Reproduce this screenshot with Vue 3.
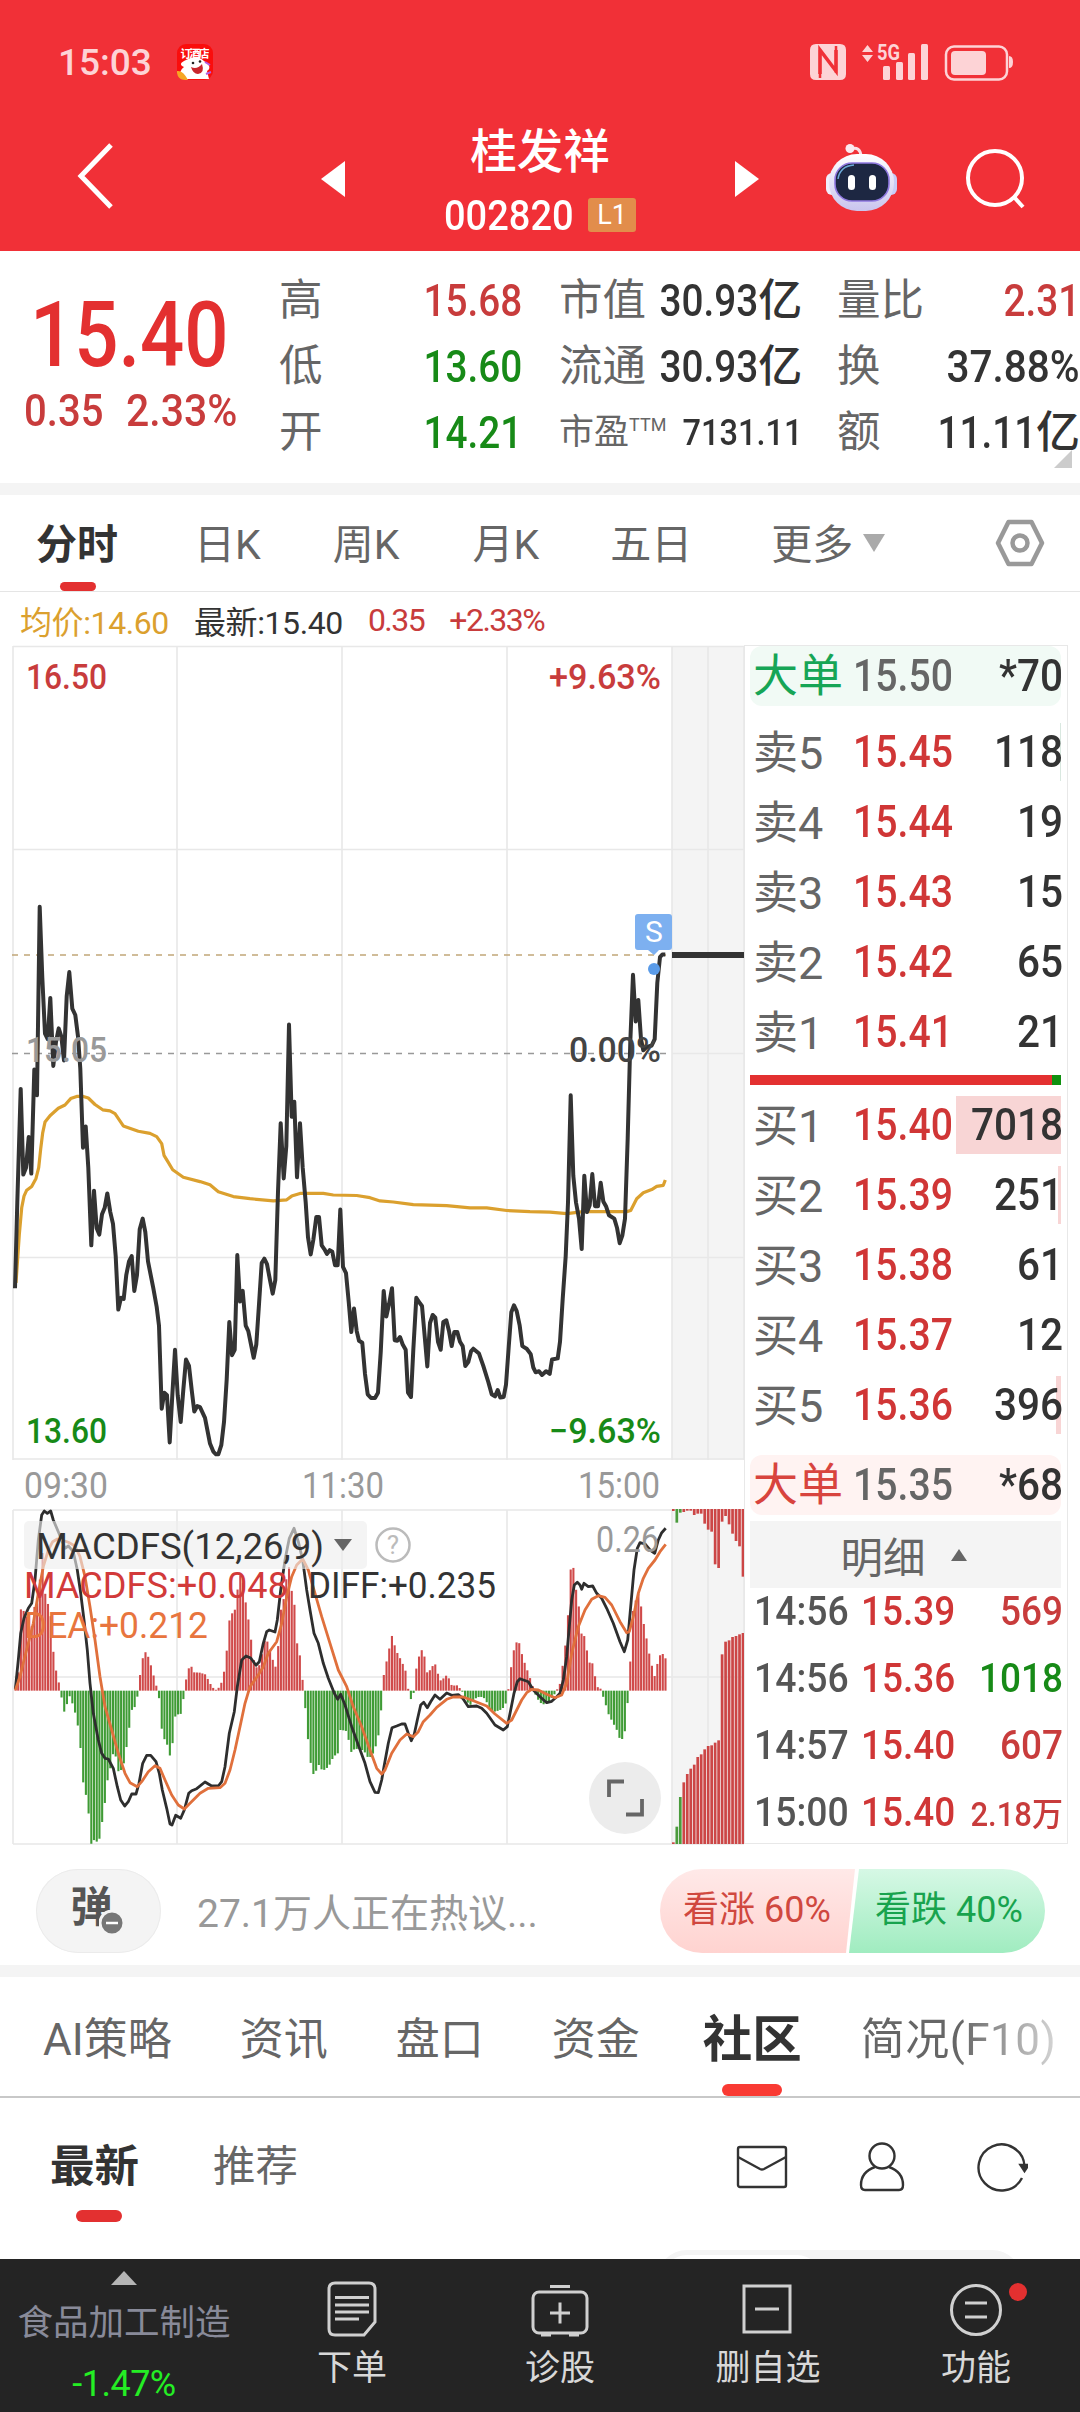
<template>
  <div class="page">
    <header class="header">
      <div class="status">
        <span class="clock">15:03</span>
        <svg class="app-icon" viewBox="0 0 36 36">
          <rect width="36" height="36" rx="9" fill="#fa0d0c" />
          <path d="M4 35Q1 27 7 23Q0 20 9 16Q19 10 27 17Q36 23 30 27L32 35Z" fill="#fff" />
          <path d="M0 27q6-1 11 9H8Q1 36 0 29Z" fill="#f6a623" />
          <path d="M14 23q6 3 11-3q3 9-4 10q-5 0-7-7Z" fill="#c9262c" />
          <path d="M28 18l5 3M29 30l5-2" stroke="#b45be0" stroke-width="2" />
          <circle cx="16" cy="19" r="1.3" fill="#222" />
          <circle cx="23" cy="17.5" r="1.3" fill="#222" />
          <text x="18" y="14" font-size="11" text-anchor="middle" fill="#fff" font-weight="700" textLength="29">订酒店</text>
        </svg>
        <svg class="sys-icons" viewBox="0 0 206 40">
          <g fill="#fdd3d6">
            <path d="M6 2h24q6 0 6 6v24q0 6-6 6H6q-6 0-6-6V8q0-6 6-6Z" />
            <path d="M52 10l5.500-7 5.500 7ZM52 13l5.500 7 5.500-7Z" />
            <rect x="73" y="24" width="7" height="14" rx="1.5" />
            <rect x="86" y="20" width="7" height="18" rx="1.5" />
            <rect x="98" y="11" width="7" height="27" rx="1.5" />
            <rect x="111" y="2" width="7" height="36" rx="1.5" />
            <rect x="141" y="9" width="35" height="24" rx="4" />
            <path d="M199 14q4 0 4 6t-4 6Z" />
          </g>
          <path d="M10 32V8l16 21V8" fill="none" stroke="#f03037" stroke-width="3.5" />
          <path d="M10 36V8M26 31V4" fill="none" stroke="#f03037" stroke-width="2.5" />
          <rect x="136" y="4.5" width="61" height="33" rx="8" fill="none" stroke="#fdd3d6" stroke-width="2.5" />
          <text x="67" y="17.5" font-size="22" font-weight="700" fill="#fdd3d6" textLength="23" lengthAdjust="spacingAndGlyphs">5G</text>
        </svg>
      </div>
      <div class="title-bar">
        <svg class="back" viewBox="0 0 44 72"><path d="M39 5L9 36l30 31" /></svg>
        <svg class="prev" viewBox="0 0 24 36"><path d="M24 0v36L0 18Z" /></svg>
        <div class="stock">
          <h1>桂发祥</h1>
          <div class="code"><span class="num">002820</span><b>L1</b></div>
        </div>
        <svg class="next" viewBox="0 0 24 36"><path d="M0 0v36L24 18Z" /></svg>
        <svg class="robot" viewBox="0 0 74 68">
          <defs>
            <linearGradient id="shell" x1="0" y1="0" x2="0" y2="1">
              <stop offset="0" stop-color="#fff" />
              <stop offset="1" stop-color="#c9c4ee" />
            </linearGradient>
          </defs>
          <path d="M26 5q9-3 10 7" fill="none" stroke="#fbdfe6" stroke-width="3" />
          <circle cx="25" cy="4.5" r="4.5" fill="#fbe9ef" />
          <rect x="1" y="29" width="12" height="22" rx="6" fill="#f0eefc" />
          <rect x="60" y="29" width="12" height="22" rx="6" fill="#c8ccf7" />
          <rect x="4" y="10" width="65" height="57" rx="28" fill="url(#shell)" />
          <rect x="10" y="19" width="54" height="38" rx="17" fill="#1d2742" stroke="#8f78e0" stroke-width="1.6" />
          <path d="M13 35q2-13 16-14" fill="none" stroke="#6ba9d8" stroke-width="1.5" />
          <rect x="23" y="31" width="7" height="15" rx="3.5" fill="#fff" />
          <rect x="44" y="31" width="7" height="15" rx="3.5" fill="#fff" />
        </svg>
        <svg class="search" viewBox="0 0 64 64">
          <circle cx="31" cy="31" r="27" />
          <path d="M50 50l9 10" />
        </svg>
      </div>
    </header>

    <section class="quote">
      <div class="price">
        <strong>15.40</strong>
        <p><span>0.35</span><span>2.33%</span></p>
      </div>
      <dl v-for="(col, i) in stats" :key="i" :class="'col' + i">
        <div v-for="s in col" :key="s.label" :class="{ small: s.sup }">
          <dt>{{ s.label }}<sup v-if="s.sup">{{ s.sup }}</sup></dt>
          <dd :class="s.tone"><span>{{ s.value }}</span>{{ s.unit }}</dd>
        </div>
      </dl>
      <svg class="corner" viewBox="0 0 18 18"><path d="M18 0v18H0Z" fill="#ccc" /></svg>
    </section>

    <nav class="periods">
      <span v-for="(p, i) in periods" :key="p" :class="['p' + i, { on: i === 0 }]">{{ p }}</span>
      <svg class="caret" viewBox="0 0 22 18"><path d="M0 0h22L11 18Z" fill="#aaa" /></svg>
      <svg class="hex" viewBox="0 0 50 48">
        <path d="M13.500 3h23L47 24 36.500 45h-23L3 24Z" />
        <circle cx="25" cy="24" r="7.5" />
      </svg>
    </nav>

    <div class="legend">
      <span class="avg">均价:14.60</span>
      <span>最新:15.40</span>
      <span class="up">0.35</span>
      <span class="up">+2.33%</span>
    </div>

    <main class="market">
      <div class="charts">
        <svg class="trend" viewBox="0 0 746 820">
          <rect x="672" y="6" width="72" height="814" fill="#f4f4f4" />
          <g class="grid">
            <path d="M13 6.500H744M13 209.500H744M13 617.500H744M13 819H744M672 413.500H744" />
            <path d="M13 6V820M177 6V820M342 6V820M507 6V820M672 6V820M708 6V820M744 6V820" />
          </g>
          <path class="dash" d="M12 413.500H666" stroke="#999" />
          <path class="dash" d="M12 315H666" stroke="#c1a678" />
          <path :d="avgPath" class="avg-line" />
          <path :d="pricePath" class="price-line" />
          <path d="M672 315H744" stroke="#333" stroke-width="6" />
          <path d="M638 274h31q3 0 3 3v30q0 3-3 3h-10l-5 5-6-5h-10q-3 0-3-3v-30q0-3 3-3Z" fill="#7db0f0" />
          <circle cx="654" cy="329" r="6" fill="#5a9be8" />
          <text x="654" y="302" class="mark">S</text>
          <text
            v-for="t in axis"
            :key="t.text"
            :x="t.x"
            :y="t.y"
            :fill="t.fill"
            :textLength="t.w"
            lengthAdjust="spacingAndGlyphs"
          >{{ t.text }}</text>
        </svg>
        <svg class="macd" viewBox="0 0 746 400">
          <rect x="672" y="50" width="72" height="334" fill="#f4f4f4" />
          <g class="grid">
            <path d="M13 50H744M13 217H744M13 384H744M13 50V384M177 50V384M342 50V384M507 50V384M672 50V384M708 50V384M744 50V384" />
          </g>
          <rect v-for="b in bars" :key="b.x" :x="b.x" :y="b.y" width="2.1" :height="b.h" :fill="b.up ? '#d04a4a' : '#3f9b35'" />
          <rect v-for="b in sideBars" :key="b.k" :x="b.x" :y="b.y" width="2.7" :height="b.h" :fill="b.up ? '#cc4646' : '#4a9b3c'" />
          <path :d="diffPath" class="diff-line" />
          <path :d="deaPath" class="dea-line" />
          <rect x="24" y="61" width="343" height="48" rx="5" fill="#eee" fill-opacity=".62" />
          <path d="M334 79h18l-9 12Z" fill="#666" />
          <circle cx="393" cy="85" r="16.5" fill="none" stroke="#bbb" stroke-width="2.5" />
          <text x="393" y="94" class="help">?</text>
          <text
            v-for="t in macdTexts"
            :key="t.text"
            :x="t.x"
            :y="t.y"
            :fill="t.fill"
            :textLength="t.w"
            lengthAdjust="spacingAndGlyphs"
            class="ind"
          >{{ t.text }}</text>
          <circle cx="625" cy="338" r="36" fill="#ececec" />
          <path d="M609 337v-15.500h15M642 339v15.500h-16" fill="none" stroke="#666" stroke-width="3.8" />
        </svg>
      </div>

      <aside class="book">
        <div class="big sell"><i>大单</i><em>15.50</em><b>*70</b></div>
        <div v-for="r in asks" :key="r.name" class="row">
          <i>{{ r.name }}</i><em>{{ r.price }}</em><b>{{ r.vol }}</b>
          <u :style="{ width: r.bar + 'px' }"></u>
        </div>
        <div class="ratio"></div>
        <div v-for="r in bids" :key="r.name" class="row bid">
          <i>{{ r.name }}</i><em>{{ r.price }}</em><b>{{ r.vol }}</b>
          <u :style="{ width: r.bar + 'px' }"></u>
        </div>
        <div class="big buy"><i>大单</i><em>15.35</em><b>*68</b></div>
        <div class="detail-head">明细<svg viewBox="0 0 16 12"><path d="M8 0l8 12H0Z" fill="#666" /></svg></div>
        <div v-for="(t, i) in ticks" :key="i" class="tick">
          <span>{{ t.time }}</span><em>{{ t.price }}</em><b :class="t.tone">{{ t.vol }}</b>
        </div>
      </aside>
    </main>

    <section class="hot">
      <div class="danmu">
        <span>弹</span>
        <svg viewBox="0 0 26 26"><circle cx="13" cy="13" r="12" fill="#777" stroke="#f4f4f4" stroke-width="3" /><path d="M7 13h12" stroke="#fff" stroke-width="2.5" /></svg>
      </div>
      <p>27.1万人正在热议...</p>
      <div class="vote">
        <span class="bull">看涨 60%</span>
        <span class="bear">看跌 40%</span>
      </div>
    </section>

    <nav class="sections">
      <span v-for="(s, i) in sections" :key="s" :class="['s' + i, { on: i === 4 }]">{{ s }}</span>
    </nav>

    <section class="feed">
      <div class="feed-tabs">
        <span class="on">最新</span>
        <span>推荐</span>
      </div>
      <div class="feed-icons">
        <svg viewBox="0 0 52 52"><rect x="2" y="6" width="48" height="40" rx="2" /><path d="M2 16l22 12q2 1 4 0l22-12" /></svg>
        <svg viewBox="0 0 52 52"><circle cx="26" cy="15" r="12.5" /><path d="M19 26Q5 31 5 44q0 5 4 5h34q4 0 4-5 0-13-14-18" /></svg>
        <svg viewBox="0 0 52 52"><path d="M46 37A23 23 0 1 1 48.500 25" /><path d="M44.500 24h8l-4 6Z" fill="#333" /></svg>
      </div>
      <div class="peek"><div></div></div>
    </section>

    <footer class="bottom">
      <div class="sector">
        <svg viewBox="0 0 26 14"><path d="M13 0l13 14H0Z" fill="#b5b5b5" /></svg>
        <span>食品加工制造</span>
        <b>-1.47%</b>
      </div>
      <div class="item">
        <svg viewBox="0 0 60 60">
          <path d="M13 4h34q6 0 6 6v33l-11 13H13q-6 0-6-6V10q0-6 6-6Z" />
          <path d="M13 18.500h34M13 26h34M13 33h34M13 40h24" />
        </svg>
        <span>下单</span>
      </div>
      <div class="item">
        <svg viewBox="0 0 60 60">
          <rect x="3" y="13" width="54" height="41" rx="6" />
          <path d="M20 7.500h20M30 23.500v21M20 34h20M11 56h10M39 56h10" />
        </svg>
        <span>诊股</span>
      </div>
      <div class="item">
        <svg viewBox="0 0 60 60"><rect x="6" y="7" width="46" height="46" /><path d="M17 30h24" /></svg>
        <span>删自选</span>
      </div>
      <div class="item">
        <svg viewBox="0 0 60 60">
          <circle cx="30" cy="31" r="24.5" />
          <path d="M19 24h22M19 38h22" />
        </svg>
        <i class="dot"></i>
        <span>功能</span>
      </div>
    </footer>
  </div>
</template>

<script setup>
const stats = [
  [
    { label: '高', value: '15.68', tone: 'up' },
    { label: '低', value: '13.60', tone: 'down' },
    { label: '开', value: '14.21', tone: 'down' },
  ],
  [
    { label: '市值', value: '30.93', unit: '亿' },
    { label: '流通', value: '30.93', unit: '亿' },
    { label: '市盈', sup: 'TTM', value: '7131.11' },
  ],
  [
    { label: '量比', value: '2.31', tone: 'up' },
    { label: '换', value: '37.88%', tone: 'wide' },
    { label: '额', value: '11.11', unit: '亿' },
  ],
]

const periods = ['分时', '日K', '周K', '月K', '五日', '更多']
const sections = ['AI策略', '资讯', '盘口', '资金', '社区', '简况(F10)']

const asks = [
  { name: '卖5', price: '15.45', vol: 118, bar: 1 },
  { name: '卖4', price: '15.44', vol: 19, bar: 0 },
  { name: '卖3', price: '15.43', vol: 15, bar: 0 },
  { name: '卖2', price: '15.42', vol: 65, bar: 0 },
  { name: '卖1', price: '15.41', vol: 21, bar: 0 },
]
const bids = [
  { name: '买1', price: '15.40', vol: 7018, bar: 105 },
  { name: '买2', price: '15.39', vol: 251, bar: 3 },
  { name: '买3', price: '15.38', vol: 61, bar: 0 },
  { name: '买4', price: '15.37', vol: 12, bar: 0 },
  { name: '买5', price: '15.36', vol: 396, bar: 5 },
]
const ticks = [
  { time: '14:56', price: '15.39', vol: '569', tone: 'up' },
  { time: '14:56', price: '15.36', vol: '1018', tone: 'down' },
  { time: '14:57', price: '15.40', vol: '607', tone: 'up' },
  { time: '15:00', price: '15.40', vol: '2.18万', tone: 'up wan' },
]

const axis = [
  { text: '16.50', x: 26, y: 49, w: 81, fill: '#c83c3c' },
  { text: '15.05', x: 26, y: 422, w: 81, fill: '#999' },
  { text: '13.60', x: 26, y: 803, w: 81, fill: '#178a17' },
  { text: '+9.63%', x: 549, y: 49, w: 112, fill: '#c83c3c' },
  { text: '0.00%', x: 569, y: 422, w: 92, fill: '#444' },
  { text: '−9.63%', x: 549, y: 803, w: 112, fill: '#178a17' },
]
const macdTexts = [
  { text: '09:30', x: 24, y: 38, w: 84, fill: '#999' },
  { text: '11:30', x: 302, y: 38, w: 82, fill: '#999' },
  { text: '15:00', x: 578, y: 38, w: 82, fill: '#999' },
  { text: 'MACDFS(12,26,9)', x: 36, y: 99, w: 288, fill: '#333' },
  { text: 'MACDFS:+0.048', x: 24, y: 138, w: 264, fill: '#d23a3a' },
  { text: 'DIFF:+0.235', x: 308, y: 138, w: 188, fill: '#333' },
  { text: 'DEA:+0.212', x: 24, y: 178, w: 184, fill: '#e8753e' },
  { text: '0.26', x: 596, y: 92, w: 63, fill: '#999' },
]

// series are "x,y" pairs in chart units, divided by sx / sy to get pixels
const parse = (s) => s.trim().split(/\s+/).map((p) => p.split(',').map(Number))
const shift = (list, dx) => list.map(([x, y]) => [x + dx, y])
const toPath = (list, sx, sy) =>
  'M' + list.map(([x, y]) => `${(x / sx).toFixed(1)} ${(y / sy).toFixed(1)}`).join('L')

const priceAm = parse(`45,1210 52,1050 62,838 70,998 78,985 86,928 94,996 103,802 111,850 119,498 127,630 135,735
143,745 151,668 160,795 168,750 176,725 184,740 192,785 200,665 208,620 217,688 226,700 234,740 241,800 249,948
257,908 265,985 274,1130 282,1028 290,1098 298,1110 306,1072 314,1060 322,1033 331,1068 339,1090 347,1150
355,1250 363,1228 371,1230 379,1185 387,1160 395,1150 403,1215 411,1185 419,1100 428,1080 436,1105 444,1160
460,1210 470,1245 477,1280 485,1435 493,1405 501,1410 509,1498 517,1410 525,1325 533,1410 542,1460 550,1400
558,1343 567,1355 575,1400 583,1440 592,1430 600,1432 615,1452 630,1500 640,1515 648,1520 655,1520 664,1503
672,1460 680,1380 688,1273 696,1335 704,1325 712,1148 720,1235 728,1215 737,1280 745,1290 753,1315 761,1340
769,1315 777,1240 785,1163 793,1155 801,1165 810,1195 818,1220 826,1195 834,1030 842,902 851,1005 859,945
867,718 875,890 883,862 891,1003 900,902 908,985 917,1050 924,1115 932,1147 940,1120 949,1077 957,1077
965,1130 973,1137 981,1146 989,1139 997,1142 1005,1167 1013,1167 1021,1063 1029,1170 1038,1182 1046,1235
1054,1292 1062,1248 1070,1290 1077,1308`)
const pricePm = parse(`7,1312 15,1370 23,1408 33,1415 45,1415 54,1405 62,1330 71,1215 79,1263 87,1240 96,1210
104,1307 112,1308 120,1301 128,1315 137,1325 144,1405 153,1413 160,1325 169,1228 177,1236 186,1243 194,1300
202,1356 210,1275 218,1260 226,1265 234,1310 242,1325 250,1273 259,1270 267,1290 275,1318 283,1292 292,1292
300,1310 308,1318 316,1355 325,1348 333,1328 340,1323 357,1332 370,1355 385,1385 395,1408 405,1412 413,1400
421,1414 431,1413 438,1390 446,1320 454,1255 462,1242 470,1253 479,1280 487,1318 500,1323 512,1333 520,1358
527,1367 537,1365 546,1372 558,1365 569,1370 576,1343 593,1341 600,1310 608,1230 617,1150 624,1050 632,850
640,1000 648,1050 657,1080 665,1137 673,1000 681,1068 689,1055 697,997 705,1057 714,1057 722,1013 730,1048
738,1057 747,1074 763,1080 771,1097 779,1126 787,1112 795,1080 803,930 811,750 819,625 827,712 835,672
843,745 850,766 860,760 875,757 884,745 892,640 900,592 907,587 916,587`)
const avgAm = parse(`48,1200 58,1110 65,1060 72,1038 80,1027 95,1020 108,1005 116,985 122,950 128,920 135,900
150,888 175,874 195,868 212,856 230,852 250,852 265,855 285,867 308,877 330,879 345,884 370,907 415,917 450,921
470,927 485,940 492,962 505,975 518,989 550,1003 600,1011 630,1017 655,1030 700,1039 750,1043 820,1047 860,1045
875,1038 900,1033 970,1033 1000,1036 1070,1037 1110,1041`)
const avgPm = parse(`60,1047 100,1049 160,1054 260,1056 330,1060 380,1060 440,1065 510,1067 570,1068 620,1071
670,1067 800,1067 812,1065 830,1043 850,1032 875,1026 890,1020 910,1018 916,1008`)

const pricePath = toPath([...priceAm, ...shift(pricePm, 1080)], 3, 1.8667)
const avgPath = toPath([...avgAm, ...shift(avgPm, 1080)], 3, 1.8667)

const histAm = parse(`46,690 54,640 62,448 70,452 78,470 86,460 95,500 103,440 111,430 119,360 127,275 135,400
143,430 151,460 159,570 167,628 175,662 183,705 191,758 199,738 207,705 215,725 223,750 232,790 240,850 248,962
257,1003 265,1056 273,1152 281,1140 290,1145 298,1136 306,1086 314,1030 322,962 331,922 339,880 347,890 355,935
363,930 371,910 379,862 387,805 395,750 403,743 411,715 419,650 427,597 435,575 444,590 452,615 460,645 468,675
476,707 484,803 492,836 500,850 509,887 517,852 525,770 533,763 541,765 549,723 557,662 566,625 574,620 582,637
600,638 615,643 623,657 631,672 640,685 650,691 662,674 671,640 680,570 688,480 696,460 704,450 712,390 720,345
729,370 737,430 745,480 753,540 761,600 769,622 778,615 786,580 794,540 802,545 810,570 818,600 826,620 834,560
842,450 850,420 858,360 867,320 875,395 883,435 891,550 899,585 907,657 915,740 923,833 932,912 940,943 948,932
956,915 964,928 975,930 988,915 1000,890 1013,880 1021,810 1037,812 1045,838 1054,878 1062,868 1080,865
1095,878 1103,892 1115,890 1127,858 1135,825 1143,750 1151,645`)
const histPm = parse(`20,600 28,562 36,525 44,558 52,580 60,595 68,612 76,632 84,686 93,720 101,697 108,628
117,588 125,570 133,590 141,637 150,630 158,617 165,612 173,640 182,662 190,655 198,647 206,655 215,677 232,676
240,686 248,697 256,715 264,730 272,735 280,718 298,710 310,712 320,727 330,750 345,755 360,750 370,743 378,728
386,680 394,612 402,565 410,545 418,550 426,585 434,610 442,632 450,655 460,685 468,710 480,728 490,733 505,725
520,708 530,690 540,670 548,612 556,552 564,460 572,322 581,324 589,400 597,445 605,530 613,528 621,575 629,610
637,610 645,650 653,682 661,686 669,710 677,735 685,762 694,780 702,795 710,810 718,834 726,837 734,815 742,733
750,612 758,455 767,420 775,400 783,440 791,492 800,540 808,585 816,620 824,650 832,610 840,585 848,582 856,595`)
const hist = [...histAm, ...shift(histPm, 1140)]

const ZERO = 692
const levelAt = (x) => {
  const i = Math.max(1, hist.findIndex((p) => p[0] >= x))
  const [x0, y0] = hist[i - 1]
  const [x1, y1] = hist[i]
  return y0 + ((y1 - y0) * (x - x0)) / (x1 - x0)
}
const bars = []
for (let x = 46; x <= 1996; x += 8.125) {
  const y = levelAt(x)
  bars.push({ x: x / 3 - 0.9, y: Math.min(y, ZERO) / 3, h: Math.max(0.6, Math.abs(y - ZERO) / 3), up: y <= ZERO })
}

// closing auction: matched volume rises from the bottom, unmatched hangs from the top
const rising = [1147, 1100, 1011, 967, 942, 926, 914, 891, 883, 868, 858, 856, 848, 841, 583, 545, 541, 531, 528, 523, 519]
const hanging = [153, 188, 158, 156, 152, 152, 165, 161, 161, 191, 209, 215, 313, 324, 185, 168, 193, 221, 243, 259, 350]
const sideX = (i) => 380 + (880 + i * 10.45) / 3 - 1.35
const sideBars = [
  ...rising.map((v, i) => ({ k: 'r' + i, x: sideX(i), y: v / 3, h: (1152 - v) / 3, up: i !== 1 && i !== 2 })),
  ...hanging.map((v, i) => ({ k: 'h' + i, x: sideX(i), y: 49, h: (v - 147) / 3, up: i !== 1 && i !== 2 })),
]

const diffAm = parse(`46,688 55,600 62,520 72,475 85,445 95,430 105,360 115,240 125,165 133,153 142,160 152,153
160,180 175,215 195,265 205,258 220,275 232,330 242,400 252,480 262,570 270,670 280,760 295,840 305,880 315,895
325,897 340,925 352,980 362,1020 374,1038 385,1025 395,1002 408,1002 417,970 428,910 440,886 452,886 468,905
478,940 487,990 500,1045 510,1092 516,1095 527,1066 542,1075 553,1050 566,1000 575,992 590,986 615,966 635,978
655,978 665,965 675,920 688,820 703,755 712,680 725,600 738,588 752,594 768,616 778,605 790,550 800,515 808,510
825,516 832,480 842,390 855,300 868,235 882,205 895,245 908,300 920,390 930,450 942,520 955,550 970,610 985,655
1003,700 1013,718 1022,703 1035,735 1055,800 1075,855 1095,910 1110,965 1125,997 1135,998 1145,960 1152,920
1165,850`)
const diffPm = parse(`36,803 50,798 65,792 75,792 85,820 94,842 103,822 112,780 122,735 131,727 142,743 152,725
165,705 180,718 200,699 215,706 235,704 248,715 265,740 290,738 305,745 320,760 345,795 370,810 382,800 392,750
402,700 412,665 420,656 445,665 460,690 480,710 500,728 515,724 530,710 540,700 550,660 560,590 568,500 575,420
583,375 592,367 600,375 605,388 612,370 625,380 638,378 650,400 665,415 680,445 700,490 720,545 733,575 743,540
752,440 762,330 772,265 780,248 795,252 810,270 824,280 835,240 845,218 857,205`)
const deaAm = parse(`46,690 60,650 72,600 85,550 100,490 115,400 130,320 145,270 158,245 172,237 185,240 205,247
225,258 240,290 255,350 270,440 285,540 300,650 315,740 335,810 355,880 375,940 390,968 412,980 425,965 445,935
465,917 480,925 495,960 515,1005 535,1035 553,1047 570,1030 600,1000 625,985 660,983 675,970 690,930 705,870
720,800 735,730 750,680 775,645 790,620 805,580 830,545 845,490 860,410 875,350 890,315 908,297 925,330 945,400
965,470 990,550 1015,630 1040,680 1060,740 1085,800 1110,870 1130,925 1145,942`)
const deaPm = parse(`15,930 35,880 60,840 80,822 100,830 115,815 130,785 150,765 170,742 200,718 220,711 250,711
280,722 320,738 345,762 380,790 395,780 410,750 425,720 440,698 455,688 475,690 500,703 525,713 545,705 560,670
575,580 595,500 615,450 635,418 655,407 675,412 695,435 720,485 740,518 748,515 760,470 775,400 790,355 805,325
825,300 840,275 857,253`)

const diffPath = toPath([...diffAm, ...shift(diffPm, 1140)], 3, 3)
const deaPath = toPath([...deaAm, ...shift(deaPm, 1140)], 3, 3)
</script>

<style>
body {
  margin: 0;
  background: #fff;
}
</style>

<style scoped>
.page {
  width: 1080px;
  height: 2412px;
  overflow: hidden;
  background: #fff;
  color: #333;
  font-family: Roboto, 'Noto Sans CJK SC', sans-serif;
  display: flex;
  flex-direction: column;
}
.page > * {
  flex: none;
  box-sizing: border-box;
}
svg {
  display: block;
  flex: none;
}
i, em, u {
  font-style: normal;
  text-decoration: none;
}
b {
  font-weight: 500;
}
.up {
  color: #c83c3c;
}
.down {
  color: #178a17;
}

/* header */
.header {
  height: 251px;
  background: #f13037;
  color: #fff;
}
.status {
  display: flex;
  align-items: center;
  height: 82px;
  padding: 42px 68px 0 58px;
  box-sizing: border-box;
}
.clock {
  width: 119px;
  font-size: 37px;
  font-weight: 500;
  color: #fdd3d6;
}
.app-icon {
  width: 36px;
  height: 36px;
  overflow: visible;
}
.sys-icons {
  width: 206px;
  height: 40px;
  margin-left: auto;
  margin-right: -4px;
  overflow: visible;
}
.title-bar {
  display: flex;
  height: 169px;
  padding-left: 72px;
}
.title-bar > svg {
  fill: #fff;
}
.title-bar > .back {
  width: 44px;
  height: 72px;
  margin-top: 58px;
  fill: none;
  stroke: #fff;
  stroke-width: 5;
}
.prev, .next {
  width: 24px;
  height: 36px;
  margin-top: 79px;
}
.prev {
  margin-left: 205px;
}
.stock {
  width: 390px;
  text-align: center;
  padding-top: 42px;
}
.stock h1 {
  margin: 0;
  font-size: 46.5px;
  font-weight: 500;
  line-height: 56px;
}
.code {
  display: flex;
  align-items: center;
  height: 56px;
  margin-top: 7px;
  padding-left: 99px;
  font-size: 42px;
  font-weight: 500;
}
.code .num {
  width: 144px;
  text-align: left;
  transform: scaleX(0.905);
  transform-origin: left;
}
.code b {
  width: 48px;
  height: 34px;
  border-radius: 3px;
  background: #e28d4b;
  font-size: 27px;
  line-height: 34px;
  font-weight: 400;
}
.robot {
  width: 74px;
  height: 68px;
  margin: 62px 0 0 66px;
}
.title-bar > .search {
  width: 64px;
  height: 64px;
  margin: 65px 0 0 65px;
  fill: none;
  stroke: #fff;
  stroke-width: 4;
}

/* quote */
.quote {
  position: relative;
  display: flex;
  height: 232px;
  padding-top: 17px;
}
.price {
  width: 279px;
  color: #c83c3c;
}
.price strong {
  display: block;
  margin: 20px 0 0 30px;
  font-size: 90px;
  line-height: 96px;
  font-weight: 500;
  color: #e33030;
  transform: scaleX(0.865);
  transform-origin: left;
}
.price p {
  display: flex;
  margin: 3px 0 0 24px;
  font-size: 44px;
  line-height: 48px;
  font-weight: 500;
}
.price p span {
  width: 102px;
  transform: scaleX(0.91);
  transform-origin: left;
}
.price p span + span {
  transform: scaleX(0.93);
}
.quote dl {
  margin: 0;
  width: 243px;
}
.quote .col1 {
  margin-left: 37px;
  width: 240px;
}
.quote .col2 {
  margin-left: 38px;
  width: 243px;
}
.quote dl div {
  display: flex;
  justify-content: space-between;
  height: 66px;
  line-height: 66px;
}
.quote dt {
  font-size: 43.5px;
  color: #666;
  white-space: nowrap;
}
.quote dd {
  display: flex;
  margin: 0;
  font-size: 44px;
  font-weight: 500;
  white-space: nowrap;
}
.quote dd span {
  transform: scaleX(0.88);
  transform-origin: right;
}
.quote .wide span {
  transform: scaleX(0.92);
}
.quote .small dt {
  font-size: 35px;
}
.quote .small dd {
  font-size: 37px;
}
.quote sup {
  font-size: 18px;
  line-height: 1;
  vertical-align: 13px;
}
.corner {
  position: absolute;
  right: 8px;
  bottom: 15px;
  width: 18px;
  height: 18px;
}

/* period tabs */
.periods {
  display: flex;
  align-items: center;
  height: 109px;
  border-top: 12px solid #f4f4f4;
  border-bottom: 1px solid #e5e5e5;
  padding: 0 36px 0 36px;
  font-size: 41px;
  color: #666;
}
.periods span {
  position: relative;
  top: -2px;
}
.p1 { margin-left: 76px; }
.p2 { margin-left: 72px; }
.p3 { margin-left: 73px; }
.p4 { margin-left: 71px; }
.p5 { margin-left: 79px; }
.periods .on {
  color: #333;
  font-weight: 700;
}
.periods .on::after {
  content: '';
  position: absolute;
  left: 24px;
  bottom: -20px;
  width: 36px;
  height: 9px;
  border-radius: 5px;
  background: #e33030;
}
.caret {
  width: 22px;
  height: 18px;
  margin-left: 10px;
}
.hex {
  width: 50px;
  height: 48px;
  margin-left: auto;
  margin-right: -1px;
  fill: none;
  stroke: #999;
  stroke-width: 4.5;
  stroke-linejoin: round;
}
.legend {
  display: flex;
  align-items: center;
  gap: 25px;
  height: 48px;
  padding: 8px 0 0 20px;
  font-size: 32px;
  letter-spacing: -0.4px;
}
.legend .avg {
  color: #dba02e;
}
.legend .up {
  letter-spacing: -1.5px;
}

/* charts */
.market {
  display: flex;
  height: 1220px;
}
.charts {
  width: 744px;
}
.trend {
  width: 746px;
  height: 820px;
}
.macd {
  width: 746px;
  height: 400px;
}
.charts text {
  font-size: 35px;
  font-weight: 500;
}
.charts .mark {
  font-size: 30px;
  font-weight: 400;
  fill: #fff;
  text-anchor: middle;
}
.charts .ind {
  font-size: 36px;
  font-weight: 400;
}
.charts .help {
  font-size: 26px;
  font-weight: 400;
  fill: #bbb;
  text-anchor: middle;
}
.grid path {
  fill: none;
  stroke: #e8e8e8;
  stroke-width: 1.6;
}
.dash {
  stroke-width: 1.6;
  stroke-dasharray: 6 6;
}
.price-line, .avg-line, .diff-line, .dea-line {
  fill: none;
  stroke-linejoin: round;
}
.price-line {
  stroke: #333;
  stroke-width: 4;
}
.avg-line {
  stroke: #dba02e;
  stroke-width: 3.2;
}
.diff-line {
  stroke: #2e2e2e;
  stroke-width: 2.8;
}
.dea-line {
  stroke: #e0703c;
  stroke-width: 2.8;
}

/* order book */
.book {
  width: 324px;
  height: 1199px;
  margin-top: 5px;
  padding: 0 6px 0 5px;
  box-sizing: border-box;
  border: 1px solid #e8e8e8;
  font-size: 45px;
  font-weight: 500;
  white-space: nowrap;
}
.big, .row, .tick {
  position: relative;
  display: flex;
  align-items: center;
  height: 70px;
  padding-left: 3px;
}
.big > *, .row > *, .tick > * {
  flex: none;
}
.big i, .row i {
  width: 100px;
  padding-bottom: 5px;
  color: #666;
  font-weight: 400;
}
.row em, .row b {
  padding-bottom: 1px;
}
.book em {
  width: 114px;
  color: #d03636;
  transform: scaleX(0.87);
  transform-origin: left;
}
/* the box of a long volume may run under the price, the drawn text is narrower */
.book b {
  width: 104px;
  margin-left: auto;
  margin-right: -1px;
  text-align: right;
  color: #333;
  position: relative;
  z-index: 1;
  transform: scaleX(0.9);
  transform-origin: right;
}
.row b, .big b {
  margin-left: -8px;
}
.book .big {
  height: 60px;
  box-sizing: border-box;
  padding-bottom: 2px;
  border-radius: 12px;
  background: #f1faf5;
}
.book .big em {
  color: #666;
}
.book .sell {
  margin-bottom: 11px;
}
.book .sell i {
  color: #16a556;
}
.book .buy {
  margin-top: 15px;
  background: #fff3f2;
}
.book .buy i {
  color: #d8443e;
}
.row u {
  position: absolute;
  right: 0;
  top: 6px;
  height: 58px;
  background: #d9e8e0;
}
.bid u {
  background: #f8d5d5;
}
.ratio {
  height: 10px;
  margin: 8px 0 5px;
  background: linear-gradient(to right, #e33030 302px, #109010 302px);
}
.detail-head {
  display: flex;
  align-items: center;
  justify-content: center;
  gap: 25px;
  height: 67px;
  margin: 6px 0 -11px;
  padding-right: 4px;
  background: #f4f4f4;
  color: #666;
  font-size: 42.5px;
  font-weight: 400;
}
.detail-head svg {
  width: 16px;
  height: 12px;
}
.tick {
  height: 67px;
  padding: 0 2px 0 4px;
  font-size: 41px;
}
.tick span {
  width: 107px;
  color: #555;
  transform: scaleX(0.91);
  transform-origin: left;
}
.book .tick em {
  width: 102px;
  transform: scaleX(0.9);
}
.book .tick b {
  width: 100px;
}
.book .tick .up {
  color: #c83c3c;
}
.book .tick .down {
  color: #178a17;
}
.book .tick .wan {
  font-size: 33px;
  transform: scaleX(0.94);
}

/* hot bar */
.hot {
  display: flex;
  align-items: center;
  height: 117px;
  padding: 9px 35px 12px 36px;
  border-bottom: 12px solid #f4f4f4;
}
.danmu {
  position: relative;
  width: 125px;
  height: 84px;
  border-radius: 42px;
  background: #f4f4f4;
  box-shadow: inset 0 0 0 1px #ebebeb;
  text-align: center;
  font-size: 42px;
  line-height: 78px;
  font-weight: 700;
  color: #555;
}
.danmu span {
  margin-right: 14px;
}
.danmu svg {
  position: absolute;
  left: 63px;
  top: 41px;
  width: 26px;
  height: 26px;
}
.hot p {
  margin: -2px 0 0 36px;
  font-size: 39px;
  color: #999;
}
.vote {
  display: flex;
  width: 385px;
  height: 84px;
  margin-left: auto;
  border-radius: 42px;
  overflow: hidden;
  font-size: 36px;
  line-height: 83px;
}
.bull {
  width: 195px;
  padding-left: 23px;
  box-sizing: border-box;
  background: linear-gradient(#ffe9e8, #ffd3d0);
  clip-path: polygon(0 0, 100% 0, 186px 100%, 0 100%);
  color: #d0483f;
}
.bear {
  flex: 1;
  margin-left: -6px;
  padding-left: 26px;
  background: linear-gradient(#d6f8e5, #a0ecc0);
  clip-path: polygon(10px 0, 100% 0, 100% 100%, 0 100%);
  color: #18a34e;
}

/* section tabs */
.sections {
  position: relative;
  display: flex;
  align-items: center;
  height: 121px;
  padding: 0 0 2px 43px;
  border-bottom: 2px solid #c8c8c8;
  font-size: 44px;
  color: #666;
  white-space: nowrap;
}
.sections span {
  position: relative;
}
.s1 { margin-left: 68px; }
.s2 { margin-left: 68px; }
.s3 { margin-left: 68px; }
.s4 { margin-left: 63px; }
.s5 {
  margin-left: 59px;
  letter-spacing: 0.5px;
  color: transparent;
  background: linear-gradient(to right, #666 50%, #d5d5d5);
  background-clip: text;
}
.sections .on {
  font-size: 49.5px;
  font-weight: 700;
  color: #333;
}
.sections .on::after {
  content: '';
  position: absolute;
  left: 19px;
  bottom: -25px;
  width: 60px;
  height: 12px;
  border-radius: 6px;
  background: #f93a33;
}

/* feed */
.feed {
  position: relative;
  display: flex;
  justify-content: space-between;
  height: 161px;
  padding: 38px 52px 0 50px;
  overflow: hidden;
}
.feed-tabs {
  display: flex;
  gap: 74px;
  font-size: 42.5px;
  line-height: 62px;
  color: #666;
}
.feed-tabs .on {
  position: relative;
  font-size: 44.5px;
  font-weight: 700;
  color: #333;
}
.feed-tabs .on::after {
  content: '';
  position: absolute;
  left: 26px;
  top: 74px;
  width: 46px;
  height: 12px;
  border-radius: 6px;
  background: #e33030;
}
.feed-icons {
  display: flex;
  gap: 68px;
  padding-top: 5px;
}
.feed-icons svg {
  width: 52px;
  height: 52px;
  fill: none;
  stroke: #333;
  stroke-width: 2.4;
}
.peek {
  position: absolute;
  left: 657px;
  top: 152px;
  width: 365px;
  height: 60px;
  border-radius: 30px;
  background: #f4f4f4;
}
.peek div {
  width: 160px;
  height: 50px;
  margin: 5px;
  border-radius: 25px;
  background: #fff;
}

/* bottom bar */
.bottom {
  display: flex;
  height: 153px;
  background: #242424;
  color: #d8d8d8;
}
.sector {
  width: 248px;
  display: flex;
  flex-direction: column;
  align-items: center;
  padding-top: 12px;
  box-sizing: border-box;
}
.sector svg {
  width: 26px;
  height: 14px;
}
.sector span {
  margin-top: 11px;
  font-size: 35.5px;
  line-height: 54px;
  color: #888a99;
}
.sector b {
  margin-top: 8px;
  font-size: 36px;
  line-height: 52px;
  font-weight: 400;
  letter-spacing: -0.5px;
  color: #24ee24;
}
.item {
  position: relative;
  width: 208px;
  display: flex;
  flex-direction: column;
  align-items: center;
  padding-top: 20px;
  box-sizing: border-box;
}
.item svg {
  width: 60px;
  height: 60px;
  fill: none;
  stroke: #d0d0d0;
  stroke-width: 3;
}
.item span {
  margin-top: 3px;
  font-size: 35px;
  line-height: 54px;
}
.dot {
  position: absolute;
  left: 137px;
  top: 24px;
  width: 18px;
  height: 18px;
  border-radius: 50%;
  background: #e33030;
}
</style>
